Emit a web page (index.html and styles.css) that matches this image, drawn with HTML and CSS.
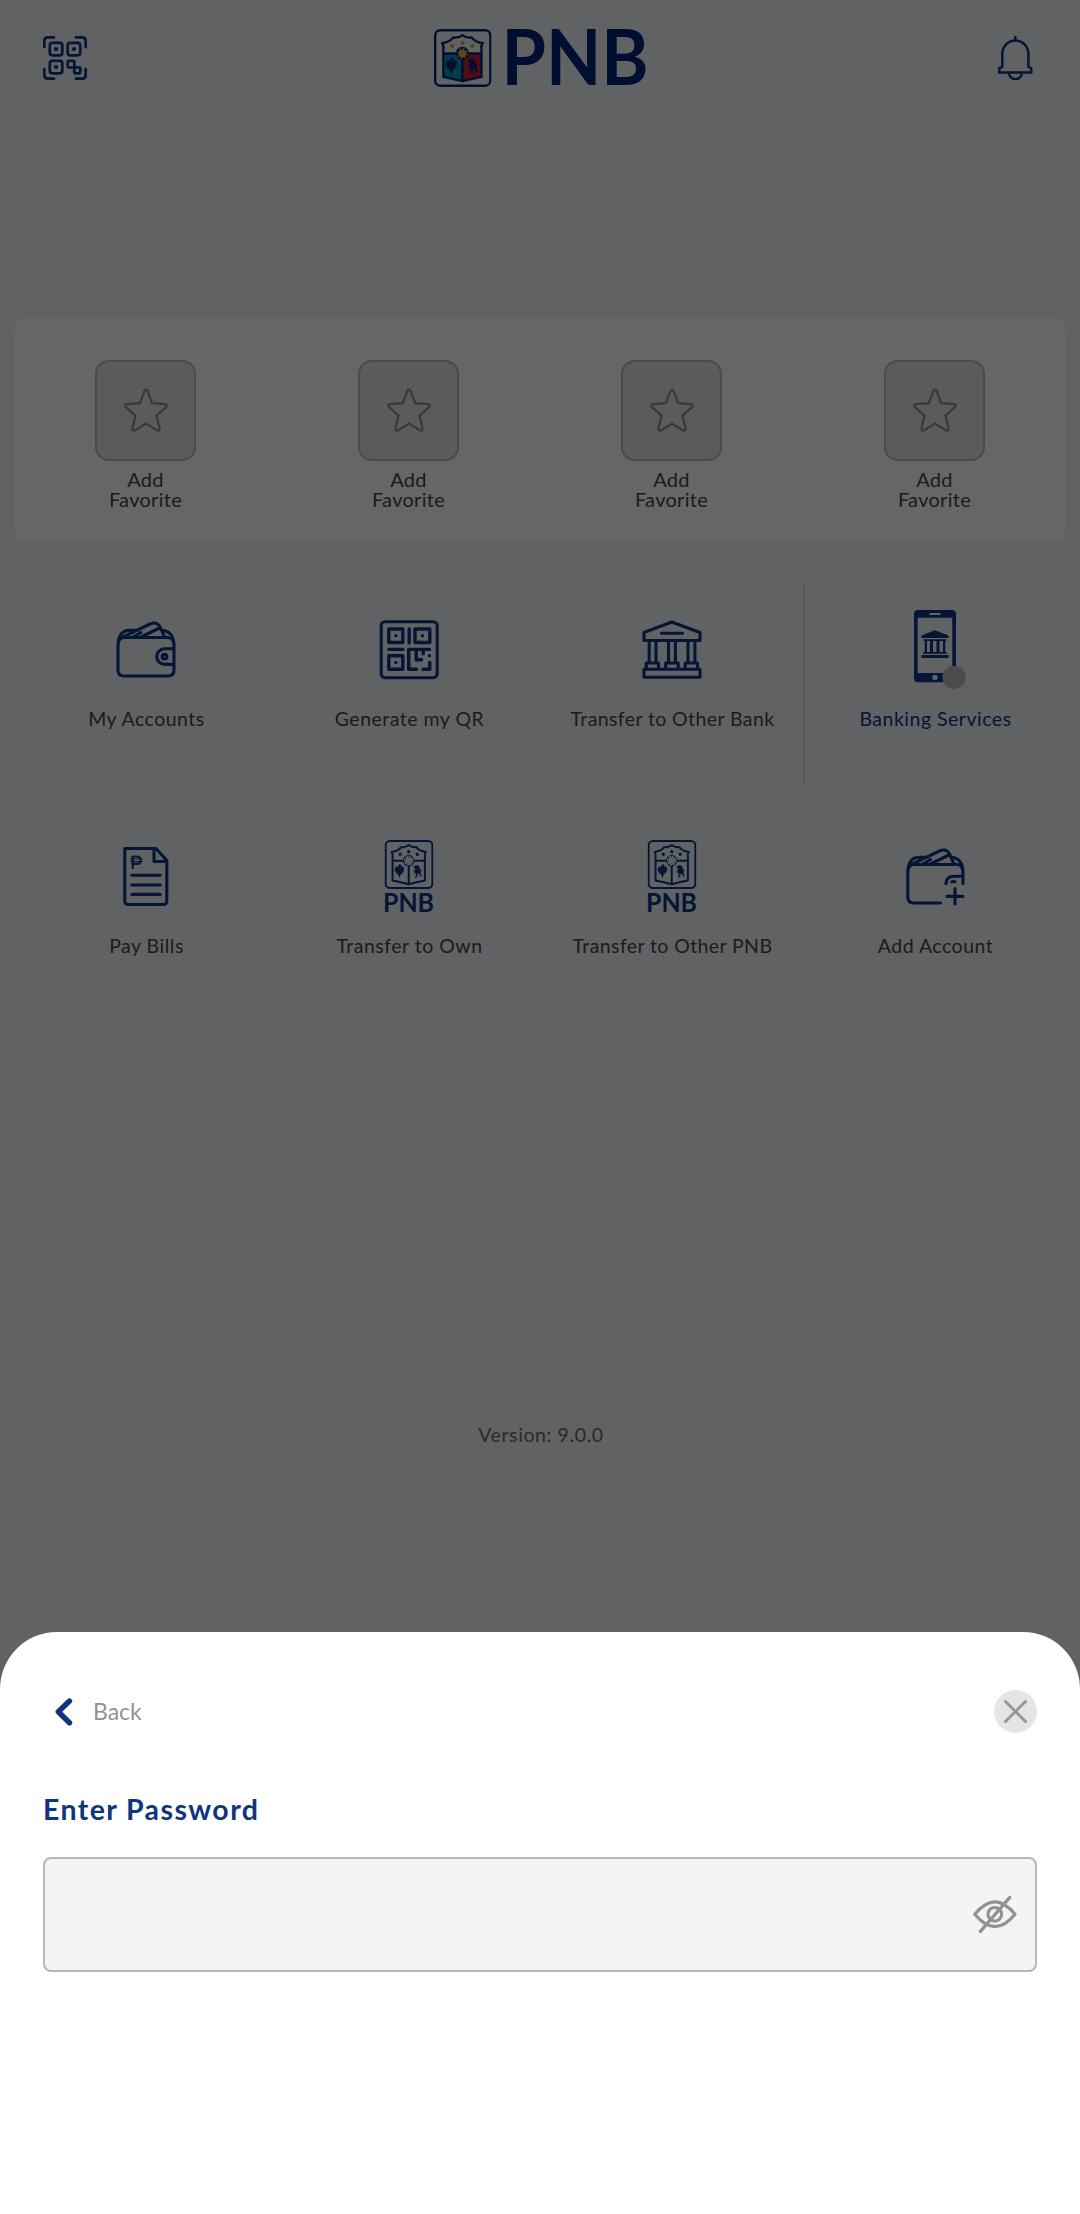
FILE: index.html
```html
<!DOCTYPE html>
<html lang="en">
<head>
<meta charset="utf-8">
<title>PNB Digital</title>
<link rel="stylesheet" href="styles.css">
</head>
<body>
<svg class="defs" aria-hidden="true">
  <symbol id="crest" viewBox="42 57 172 173">
    <rect x="45.500" y="60.500" width="165" height="166" rx="15" fill="none" stroke="currentColor" stroke-width="7"/>
    <path class="quarter-left" d="M70 130H127V212Q98 204 70 200Z"/>
    <path class="quarter-right" d="M184 130H127V212Q156 204 184 200Z"/>
    <path d="M127 75Q115 85 100 82Q90 96 67 99Q72 108 70 118V200Q100 206 127 213Q154 206 184 200V118Q182 108 187 99Q164 96 154 82Q139 85 127 75ZM70 130H184M127 130V212" fill="none" stroke="currentColor" stroke-width="7"/>
    <path d="M81 150l6 3-1-5 5 2 1-6 5-2 4 4 1 6 5-3-1 6 6-3-2 8 2 3-5 3 3 4-6 2 2 5-6-1-3 8-3 7-3-7-3-8-6 1 2-5-6-2 3-4-5-3 2-3Z" fill="currentColor"/>
    <path d="M143 152l8-6 10 1 6 8-4 6 6-2 3 5-3 5 1 7 3 8-7 3 1-7-6-4-5 5 3 7-11 1 5-8-1-7-8 2 6-7-8-2 8-5-1-4Z" fill="currentColor"/>
    <circle cx="127" cy="130" r="20" fill="currentColor"/>
    <circle class="sun-ray" cx="127" cy="130" r="14"/>
    <circle class="sun" cx="127" cy="130" r="11"/>
    <path class="star" d="M127 90l2.500 5 5.500 .500-4 4 1 6-5-3-5 3 1-6-4-4 5.500-.500ZM97 99l2.500 5 5.500 .500-4 4 1 6-5-3-5 3 1-6-4-4 5.500-.500ZM157 99l2.500 5 5.500 .500-4 4 1 6-5-3-5 3 1-6-4-4 5.500-.500Z"/>
  </symbol>
  <symbol id="star" viewBox="0 0 44 44">
    <path d="M20.300 3.200Q22 .200 23.700 3.200L28.100 15.200 41 16.200Q44 16.800 42 19.200L32.500 27.600 35.600 40.500Q35.600 43.500 32.800 42.200L22 35.500 11.200 42.200Q8.400 43.500 8.400 40.500L11.500 27.600 2 19.200Q0 16.800 3 16.200L15.900 15.200Z" fill="none" stroke="currentColor" stroke-width="2.300"/>
  </symbol>
</svg>

<main class="home">
  <header class="header">
    <svg class="scan" viewBox="0 0 44 44" fill="none" stroke="currentColor" stroke-width="2.700" stroke-linecap="round">
      <path d="M1.300 11V5Q1.300 1.300 5 1.300H11M33 1.300H39Q42.700 1.300 42.700 5V11M42.700 33V39Q42.700 42.700 39 42.700H33M11 42.700H5Q1.300 42.700 1.300 39V33"/>
      <rect x="6.800" y="6.800" width="12.500" height="12.500" rx="2.500"/><rect x="24.700" y="6.800" width="12.500" height="12.500" rx="2.500"/><rect x="6.800" y="24.800" width="12.500" height="12.500" rx="2.500"/>
      <rect x="24.700" y="24.800" width="6.700" height="6.700" rx="1"/><rect x="31.300" y="31.300" width="6" height="6" rx="1"/>
      <path d="M13 13h.1M31 13h.1M13 31h.1" stroke-width="4.200"/>
    </svg>
    <svg class="logo" viewBox="0 0 214 58">
      <use class="crest-color" href="#crest" x="0" y="0" width="57.500" height="58"/>
      <text class="brand" x="67.500" y="56" font-size="77" textLength="147" lengthAdjust="spacingAndGlyphs">PNB</text>
    </svg>
    <svg class="bell" viewBox="0 0 35 44" fill="none" stroke="currentColor" stroke-width="2.500">
      <path d="M17.300 0V4.300M4.300 31V18A13 13.500 0 0 1 30.400 18V31L33.200 32.200V36.600H1.400V32.200ZM11 37A6.400 6.200 0 0 0 23.800 37"/>
    </svg>
  </header>

  <section class="favorites">
    <div class="favorite"><div class="slot"><svg><use href="#star"/></svg></div><p>Add<br>Favorite</p></div>
    <div class="favorite"><div class="slot"><svg><use href="#star"/></svg></div><p>Add<br>Favorite</p></div>
    <div class="favorite"><div class="slot"><svg><use href="#star"/></svg></div><p>Add<br>Favorite</p></div>
    <div class="favorite"><div class="slot"><svg><use href="#star"/></svg></div><p>Add<br>Favorite</p></div>
  </section>

  <nav class="menu">
    <a class="item">
      <svg class="icon" viewBox="0 0 80 80">
        <path d="M12 36V60Q12 66 18 66H62Q68 66 68 60V36M12 36Q12 27.500 18 27.500H62Q68 27.500 68 36M12 36Q12 20.300 24 20.300H32M56 20.300Q68 21.500 68 36M16 27.300 44 14Q51 11 54 17L58.700 27M27 27 35 22.500M35 27 54.500 17.500M68 38.800H58.500A7.800 7.800 0 0 0 58.500 54.400H68"/>
        <circle cx="58.500" cy="46.700" r="2.300"/>
      </svg>
      <span>My Accounts</span>
    </a>
    <a class="item">
      <svg class="icon" viewBox="0 0 80 80">
        <rect x="12.200" y="11.700" width="56" height="56" rx="4"/>
        <g stroke-width="3.400"><path d="M19.800 19H33.800V32.500H19.800ZM46 19H60.800V32.500H46ZM19.800 45.700H33.800V59.300H19.800ZM40.200 19V33M19.800 39.400H33.800M60.500 39.400H39.700V59.300H47.500M47.200 39.400V49.700H52.500M54.200 39.400V43.700M60.800 52.500V59.300H54"/>
        <path d="M26.800 25.800h.1M53.300 25.800h.1M26.800 52.600h.1M60.400 45.700h.1"/></g>
      </svg>
      <span>Generate my QR</span>
    </a>
    <a class="item">
      <svg class="icon" viewBox="0 0 80 80">
        <path d="M12 22.500 39.800 12 68 22.500V30.500H12ZM29.500 23.300H50.500M17.200 30.500V52M24 30.500V52M36.500 30.500V52M43.400 30.500V52M56 30.500V52M62.900 30.500V52M14.300 59V53H26.500V59M33.700 59V53H46.200V59M53.200 59V53H65.500V59M12 59.300H68V67.300H12Z"/>
      </svg>
      <span class="tight">Transfer to Other Bank</span>
    </a>
    <a class="item featured">
      <svg class="icon solid" viewBox="0 0 80 80">
        <path fill-rule="evenodd" d="M23 0H57Q61 0 61 4V68Q61 72.300 57 72.300H23Q19 72.300 19 68V4Q19 0 23 0ZM22.700 7.700V63H57.300V7.700ZM34.500 3V5H45.500V3ZM40 64.700A2.700 2.700 0 1 0 40 70.100A2.700 2.700 0 1 0 40 64.700Z"/>
        <path d="M40 20.300 53.600 25.500V28H26.400V25.500ZM28.600 29.300H51.400V30.800H50.300V42H51.800V43.700H28.200V42H29.700V30.800H28.600ZM26.400 45H53.600V48H26.400Z"/>
        <path class="gap" d="M32 31H35V42H32ZM38 31H41.500V42H38ZM44.500 31H48V42H44.500Z"/>
        <circle class="dot" cx="59" cy="67.300" r="11.600"/>
      </svg>
      <span>Banking Services</span>
    </a>
    <a class="item">
      <svg class="icon" viewBox="0 0 80 80">
        <path d="M18.800 11.500H50L60.800 23.500V64Q60.800 67.500 57.500 67.500H22Q18.800 67.500 18.800 64ZM48 12V24.500H60.500M25.800 38.300H54.200M25.800 48H54.200M25.800 57.400H54.200"/>
        <path d="M26.700 31V19.500H30.500Q34.800 19.500 34.800 23.200 34.800 27 30.500 27H27" stroke-width="2.200"/>
        <path d="M24.500 22H36.300M24.500 24.600H36.300" stroke-width="1.100"/>
      </svg>
      <span>Pay Bills</span>
    </a>
    <a class="item">
      <svg class="icon solid" viewBox="0 0 80 80">
        <use href="#crest" x="15.500" y="3" width="49" height="49"/>
        <text class="brand" x="14" y="75.300" font-size="26.500" textLength="51" lengthAdjust="spacingAndGlyphs">PNB</text>
      </svg>
      <span>Transfer to Own</span>
    </a>
    <a class="item">
      <svg class="icon solid" viewBox="0 0 80 80">
        <use href="#crest" x="15.500" y="3" width="49" height="49"/>
        <text class="brand" x="14" y="75.300" font-size="26.500" textLength="51" lengthAdjust="spacingAndGlyphs">PNB</text>
      </svg>
      <span class="tight">Transfer to Other PNB</span>
    </a>
    <a class="item">
      <svg class="icon" viewBox="0 0 80 80">
        <path d="M45.500 66H19Q12.800 66 12.800 60V36Q12.800 27.500 19 27.500H62Q68 27.500 68 36V46.500M12.800 36Q12.800 20.300 24.500 20.300H32.500M56.500 20.300Q68 21.500 68 36M16.500 27.300 44.500 14Q51.500 11 54.500 17L59 27M27.500 27 35.500 22.500M35.500 27 55 17.500M68 39.200H59.500Q51 39.200 51 46.800M57 44.800Q58.500 43.800 60 44.800M60 51.500V67M52 59.400H68"/>
      </svg>
      <span>Add Account</span>
    </a>
  </nav>

  <p class="version">Version: 9.0.0</p>
</main>

<div class="overlay">
  <section class="sheet">
    <div class="sheet-bar">
      <a class="back"><svg viewBox="0 0 18 28"><path d="M14.500 3 3.300 13.800 14.500 24.800"/></svg><span>Back</span></a>
      <a class="close"><svg viewBox="0 0 43 43"><path d="M11.500 11.500 31.500 31.500M31.500 11.500 11.500 31.500"/></svg></a>
    </div>
    <h1>Enter Password</h1>
    <div class="field">
      <svg viewBox="0 0 44 39">
        <path d="M1.800 19.300Q22 -5.500 42 19.300 22 44 1.800 19.300Z"/><circle cx="21.800" cy="19.300" r="6.800"/><path d="M7.200 36.600 36.800 2.400"/>
      </svg>
    </div>
  </section>
</div>
</body>
</html>
```
FILE: styles.css
```css
* { box-sizing: border-box; }

body {
  margin: 0;
  position: relative;
  height: 2214px;
  overflow: hidden;
  background: #f2f5fa;
  color: #3f3f3f;
  font-family: Lato, "Open Sans", sans-serif;
}

p, h1 { margin: 0; }
svg { display: block; }
.defs { position: absolute; width: 0; height: 0; }

.home { color: #0a3587; }

.header {
  display: flex;
  justify-content: space-between;
  align-items: center;
  height: 116px;
  padding: 0 47px 0 43px;
}
.scan { width: 44px; height: 44px; }
.logo { width: 214px; height: 58px; margin-right: 3px; color: #002375; overflow: visible; }
.bell { width: 35px; height: 44px; }
.brand { font-family: Lato, sans-serif; font-weight: 700; fill: currentColor; }

.quarter-left { fill: var(--left, none); }
.quarter-right { fill: var(--right, none); }
.sun { fill: var(--sun, #f2f5fa); }
.sun-ray { fill: none; stroke: var(--sun, #f2f5fa); stroke-width: 6; stroke-dasharray: 4 7; }
.star { fill: var(--gold, currentColor); }
.crest-color { --left: #0b94bc; --right: #cc2032; --sun: #f0b429; --gold: #d9a021; }

.favorites {
  display: grid;
  grid-template-columns: repeat(4, 1fr);
  height: 225px;
  margin: 201px 14px 0;
  padding-top: 43px;
  border-radius: 14px;
  background: #fff;
}
.favorite { display: flex; flex-direction: column; align-items: center; }
.slot {
  display: flex;
  justify-content: center;
  align-items: center;
  width: 101px;
  height: 101px;
  padding-bottom: 2px;
  border: 2px solid #bbb;
  border-radius: 14px;
  background: #e4e4e4;
  color: #909090;
}
.slot svg { width: 44px; height: 44px; }
.favorite p {
  margin-top: 8px;
  color: #474747;
  font-size: 20px;
  line-height: 20px;
  letter-spacing: .3px;
  text-align: center;
}

.menu {
  display: grid;
  grid-template-columns: repeat(4, 1fr);
  grid-auto-rows: 198px;
  row-gap: 29px;
  margin: 43px 14px 0;
}
.item {
  display: flex;
  flex-direction: column;
  align-items: center;
  gap: 17px;
  padding-top: 25px;
}
.item span {
  padding-left: 2px;
  color: #474747;
  font-size: 19.500px;
  line-height: 24px;
  letter-spacing: .5px;
  white-space: nowrap;
}
.item span.tight { letter-spacing: .4px; }
.item.featured { background: linear-gradient(#d8dade, #d8dade) 0 0 / 2px 100% no-repeat; }
.item.featured span { color: #0a3587; }
.icon {
  width: 80px;
  height: 80px;
  overflow: visible;
  fill: none;
  stroke: currentColor;
  stroke-width: 3.100;
  stroke-linecap: round;
  stroke-linejoin: round;
}
.icon.solid { fill: currentColor; stroke: none; }
.icon .gap { fill: #f2f5fa; }
.icon .dot { fill: #bbb; }

.version {
  margin-top: 413px;
  padding-left: 2px;
  color: #6a6a6a;
  font-size: 19.500px;
  line-height: 24px;
  letter-spacing: .6px;
  text-align: center;
}

.overlay {
  position: absolute;
  inset: 0;
  display: flex;
  align-items: flex-end;
  background: rgba(0, 0, 0, .6);
}
.sheet {
  width: 100%;
  height: 582px;
  padding: 58px 43px 0;
  border-radius: 57px 57px 0 0;
  background: #fff;
}
.sheet-bar { display: flex; justify-content: space-between; align-items: center; }
.back { display: flex; align-items: center; gap: 20px; padding-left: 12px; }
.back svg { width: 18px; height: 28px; fill: none; stroke: #10357f; stroke-width: 5.400; stroke-linecap: round; stroke-linejoin: round; }
.back span { padding-bottom: 2px; color: #929292; font-size: 23px; line-height: 26px; }
.close { border-radius: 50%; background: #e5e5e5; }
.close svg { width: 43px; height: 43px; fill: none; stroke: #969696; stroke-width: 3; stroke-linecap: round; }
.sheet h1 {
  margin-top: 58px;
  color: #10357f;
  font-size: 28.500px;
  font-weight: 700;
  line-height: 36px;
  letter-spacing: 1.400px;
}
.field {
  display: flex;
  justify-content: flex-end;
  align-items: center;
  height: 115px;
  margin-top: 30px;
  padding-right: 18px;
  border: 2px solid #b7b7b7;
  border-radius: 8px;
  background: #f4f4f4;
}
.field svg { width: 44px; height: 39px; fill: none; stroke: #929292; stroke-width: 3.200; stroke-linecap: round; stroke-linejoin: round; }
```
